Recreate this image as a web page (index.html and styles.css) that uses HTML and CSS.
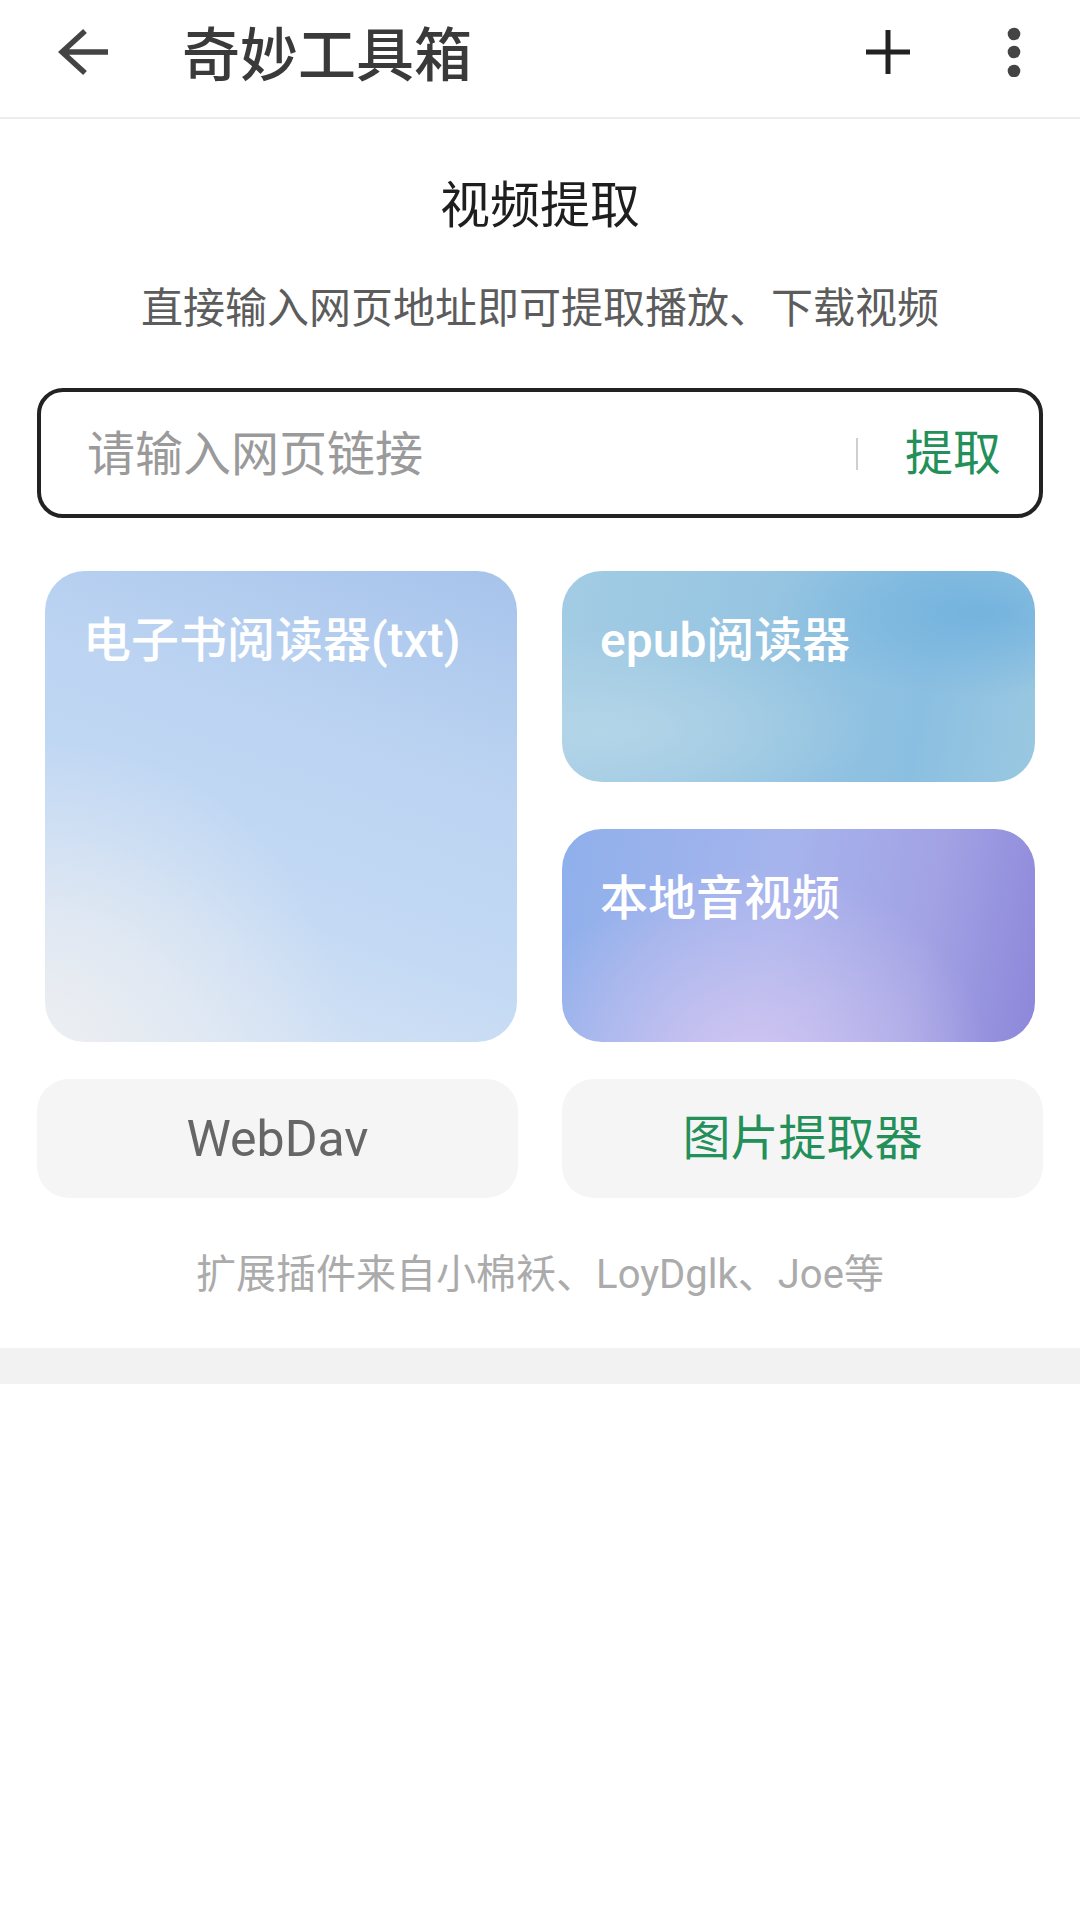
FILE: index.html
```html
<!DOCTYPE html>
<html lang="zh-CN">
<head>
  <meta charset="UTF-8" />
  <meta name="viewport" content="width=device-width, initial-scale=1.0"/>
  <title>奇妙工具箱</title>
  <link rel="stylesheet" href="styles.css">
</head>
<body>
  <header class="topbar">
    <svg class="back" width="52" height="48" viewBox="0 0 52 48">
      <path d="M27 3 L4 24 L27 45 M4 24 H50" fill="none" stroke="#444" stroke-width="5.5"/>
    </svg>
    <h1 class="app-title">奇妙工具箱</h1>
    <svg class="add" width="44" height="44" viewBox="0 0 44 44">
      <path d="M22 0 V44 M0 22 H44" fill="none" stroke="#222" stroke-width="5"/>
    </svg>
    <svg class="more" width="14" height="50" viewBox="0 0 14 50">
      <circle cx="7" cy="7" r="6.3" fill="#444"/>
      <circle cx="7" cy="25" r="6.3" fill="#444"/>
      <circle cx="7" cy="44" r="6.3" fill="#444"/>
    </svg>
  </header>

  <main>
    <h2 class="section-title">视频提取</h2>
    <p class="section-desc">直接输入网页地址即可提取播放、下载视频</p>

    <div class="search">
      <input type="text" class="search-input" placeholder="请输入网页链接">
      <span class="divider"></span>
      <button class="extract-btn">提取</button>
    </div>

    <div class="cards">
      <div class="card card-txt">电子书阅读器(txt)</div>
      <div class="card card-epub">epub阅读器</div>
      <div class="card card-media">本地音视频</div>
    </div>

    <div class="tools">
      <div class="tool">WebDav</div>
      <div class="tool tool-green">图片提取器</div>
    </div>

    <p class="credits">扩展插件来自小棉袄、LoyDglk、Joe等</p>
  </main>

  <div class="band"></div>
</body>
</html>
```

FILE: styles.css
```css
body {
  margin: 0;
  background: #fff;
  font-family: Roboto, "Noto Sans CJK SC", sans-serif;
  color: #333;
}
.topbar {
  height: 119px;
  box-sizing: border-box;
  border-bottom: 2px solid #ececec;
  padding: 0 59px 14px 58px;
  display: flex;
  align-items: center;
}
.app-title {
  margin: 8px 0 0 72px;
  flex: 1;
  font-size: 58px;
  line-height: 1;
  font-weight: 500;
  color: #3a3a3a;
}
.more {
  margin-left: 97px;
}
main {
  display: flex;
  flex-direction: column;
  align-items: center;
}
.section-title {
  margin: 62px 0 0;
  font-size: 50px;
  line-height: 1;
  font-weight: 400;
  color: #1e1e1e;
}
.section-desc {
  margin: 57px 0 0;
  font-size: 42px;
  line-height: 1;
  color: #5c5c5c;
}
.search {
  margin-top: 58px;
  width: 1006px;
  height: 130px;
  box-sizing: border-box;
  border: 4px solid #222;
  border-radius: 26px;
  display: flex;
  align-items: center;
  padding: 2px 38px 0 46px;
}
.search-input {
  flex: 1;
  min-width: 0;
  border: none;
  outline: none;
  padding: 0;
  background: transparent;
  font-family: inherit;
  font-size: 48px;
  line-height: 1;
  color: #333;
}
.search-input::placeholder {
  color: #9a9a9a;
}
.divider {
  width: 2px;
  height: 32px;
  background: #cfcfcf;
}
.extract-btn {
  margin-left: 47px;
  border: none;
  padding: 0;
  background: none;
  font-family: inherit;
  font-size: 48px;
  line-height: 1;
  color: #23905a;
  cursor: pointer;
}
.cards {
  margin-top: 53px;
  width: 990px;
  display: grid;
  grid-template-columns: 472px 473px;
  grid-template-rows: 211px 213px;
  column-gap: 45px;
  row-gap: 47px;
}
.card {
  border-radius: 40px;
  padding: 46px 38px;
  font-size: 48px;
  line-height: 1;
  font-weight: 500;
  color: #fff;
}
.card-txt {
  grid-row: 1 / 3;
  background:
    radial-gradient(ellipse at 0% 100%, #eceef1 0%, rgba(236, 238, 241, 0) 45%),
    linear-gradient(200deg, #a6c3eb 0%, #bcd4f2 35%, #c3d9f4 65%, #dbe6f5 100%);
}
.card-epub {
  background:
    radial-gradient(ellipse at 88% 20%, #74b3de 0%, rgba(116, 179, 222, 0) 35%),
    radial-gradient(ellipse at 8% 75%, #b4d5e8 0%, rgba(180, 213, 232, 0) 45%),
    linear-gradient(100deg, #a3cce4 0%, #95c4e1 45%, #8bbfe1 75%, #9ac8e1 100%);
}
.card-media {
  background:
    radial-gradient(ellipse at 40% 115%, #d3c6f1 0%, rgba(211, 198, 241, 0) 60%),
    linear-gradient(100deg, #8fb0eb 0%, #a6b4ed 45%, #a2a2e4 75%, #8d87da 100%);
}
.tools {
  margin-top: 37px;
  width: 1006px;
  display: flex;
  gap: 44px;
}
.tool {
  flex: 1;
  height: 119px;
  border-radius: 32px;
  background: #f5f5f5;
  display: flex;
  align-items: center;
  justify-content: center;
  font-size: 48px;
  line-height: 1;
  color: #666;
}
.tool:first-child {
  font-size: 50px;
}
.tool-green {
  color: #23905a;
}
.credits {
  margin: 57px 0 0;
  font-size: 40px;
  line-height: 1;
  color: #ababab;
}
.band {
  margin-top: 53px;
  height: 36px;
  background: #f2f2f2;
}
```
